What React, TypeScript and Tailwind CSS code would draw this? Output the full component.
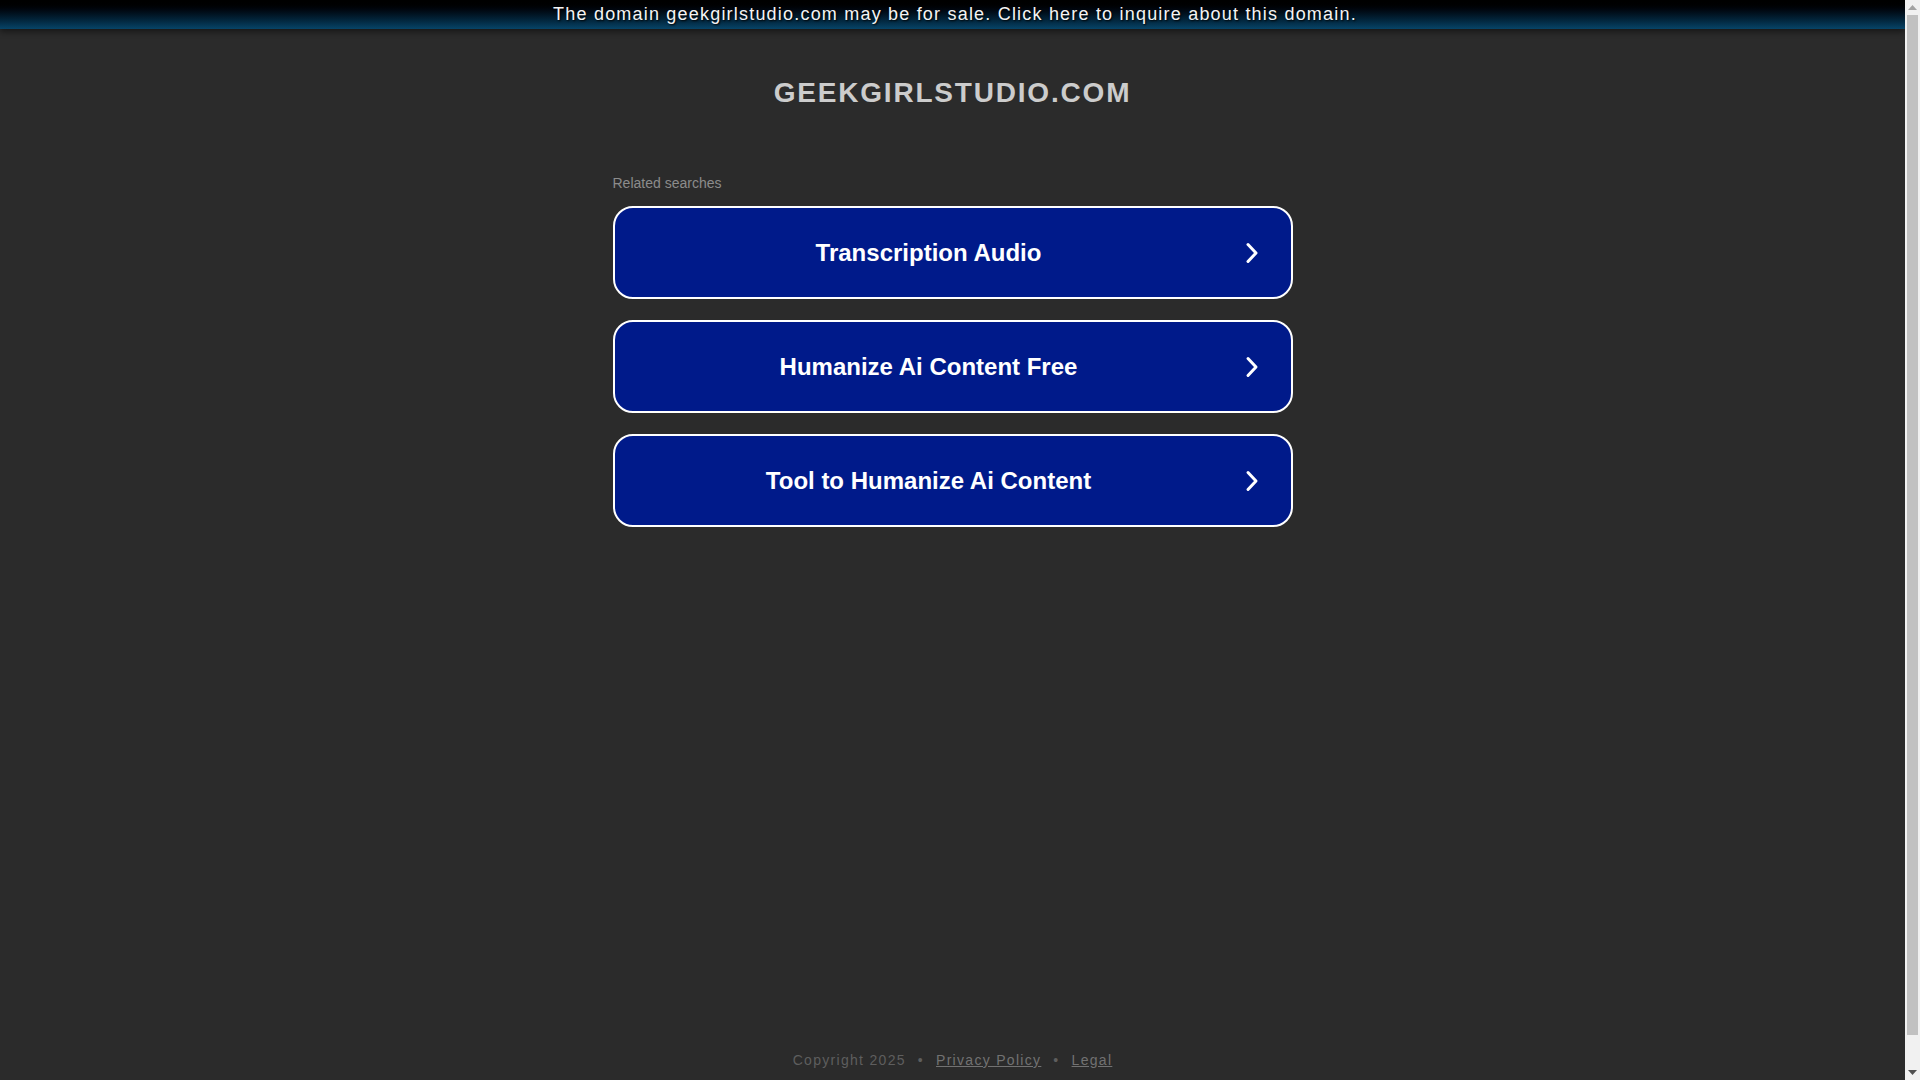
const searches = [
  "Transcription Audio",
  "Humanize Ai Content Free",
  "Tool to Humanize Ai Content",
];

function Chevron() {
  return (
    <svg width="14" height="22" viewBox="0 0 14 22" fill="none" className="shrink-0">
      <path
        d="M3 2.5 L11 11 L3 19.5"
        stroke="#ffffff"
        strokeWidth="3"
        strokeLinecap="round"
        strokeLinejoin="round"
      />
    </svg>
  );
}

function Scrollbar() {
  return (
    <div className="w-[15px] shrink-0 flex flex-col bg-[#f1f1f1]">
      <div className="h-[15px] flex items-center justify-center">
        <svg width="9" height="5" viewBox="0 0 9 5">
          <path d="M0 5 L4.5 0 L9 5 Z" fill="#a3a3a3" />
        </svg>
      </div>
      <div className="flex-1 px-[2px] pb-[30px]">
        <div className="h-full bg-[#c1c1c1]" />
      </div>
      <div className="h-[15px] flex items-center justify-center">
        <svg width="9" height="5" viewBox="0 0 9 5">
          <path d="M0 0 L9 0 L4.5 5 Z" fill="#505050" />
        </svg>
      </div>
    </div>
  );
}

export default function App() {
  return (
    <div
      className="h-[1080px] flex overflow-hidden bg-[#2b2b2b]"
      style={{ fontFamily: '"Liberation Sans", Arial, sans-serif' }}
    >
      <div className="flex-1 flex flex-col">
        <div className="h-[29px] pl-[5px] bg-gradient-to-b from-[#000000] to-[#074468] text-center text-[18px] leading-[29px] tracking-[1.2px] text-[#f4f4f4] shadow-[0_3px_6px_rgba(0,0,0,0.45)] [text-shadow:1px_1px_2px_#000]">
          The domain geekgirlstudio.com may be for sale. Click here to inquire
          about this domain.
        </div>

        <h1 className="mt-[48px] text-center text-[28px] leading-[32px] font-bold tracking-[1.8px] text-[#cccccc]">
          GEEKGIRLSTUDIO.COM
        </h1>

        <div className="w-[680px] mx-auto mt-[66px]">
          <div className="text-[14px] leading-[16px] text-[#8c8c8c]">
            Related searches
          </div>
          <div className="mt-[15px] flex flex-col gap-[21px]">
            {searches.map((s) => (
              <div
                key={s}
                className="h-[93px] flex items-center gap-[2px] rounded-[20px] border-2 border-white bg-[#001a8a] pr-[32px]"
              >
                <span className="flex-1 text-center text-[24px] font-bold text-white">
                  {s}
                </span>
                <Chevron />
              </div>
            ))}
          </div>
        </div>

        <div className="flex-1" />

        <div className="pb-[12px] text-center text-[14px] leading-[16px] tracking-[1.3px] text-[#5e5e5e]">
          Copyright 2025
          <span className="mx-[12px]">•</span>
          <a href="#" className="underline text-[#727272]">
            Privacy Policy
          </a>
          <span className="mx-[12px]">•</span>
          <a href="#" className="underline text-[#727272]">
            Legal
          </a>
        </div>
      </div>
      <Scrollbar />
    </div>
  );
}
